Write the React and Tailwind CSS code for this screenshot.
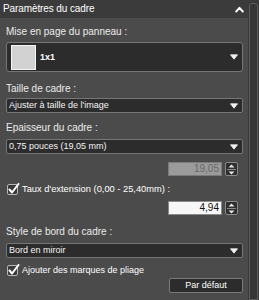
import React from "react";

const Arrow = () => (
  <svg width="8" height="6" viewBox="0 0 8 6" className="shrink-0">
    <path d="M0.5 0.8 L7.5 0.8 L4 5.2 Z" fill="#f2f2f2" stroke="#f2f2f2" strokeWidth="0.8" strokeLinejoin="round" />
  </svg>
);

const Dropdown = ({ children, className = "" }) => (
  <div className={"flex items-center justify-between bg-[#2c2c2c] border border-[#767676] rounded-[2px] pl-[2px] pr-[4px] h-[15px] " + className}>
    <span className="text-[9px] leading-[11px] text-[#f4f4f4] whitespace-nowrap">{children}</span>
    <Arrow />
  </div>
);

const Stepper = () => (
  <div className="w-[13px] h-[14px] bg-[#2e2e2e] border border-[#8a8a8a] rounded-[2px] flex flex-col items-center justify-center gap-[1px]">
    <svg width="7" height="4" viewBox="0 0 7 4"><path d="M0.5 3.6 L6.5 3.6 L3.5 0.4 Z" fill="#e8e8e8" /></svg>
    <div className="w-[9px] h-px bg-[#8a8a8a]" />
    <svg width="7" height="4" viewBox="0 0 7 4"><path d="M0.5 0.4 L6.5 0.4 L3.5 3.6 Z" fill="#e8e8e8" /></svg>
  </div>
);

const Check = () => (
  <svg width="14" height="12" viewBox="0 0 14 12" className="shrink-0">
    <rect x="0.5" y="1.5" width="10" height="10" rx="1.5" fill="#3a3a3a" stroke="#b8b8b8" />
    <path d="M2.5 6.5 L5 9.5 L11.5 1" fill="none" stroke="#ffffff" strokeWidth="2" strokeLinecap="round" strokeLinejoin="round" />
  </svg>
);

export default function App() {
  return (
    <div className="w-[259px] h-[300px] flex bg-[#4b4b4b] overflow-hidden font-['Liberation_Sans',Arial,sans-serif] text-[#ececec]">
      <div className="w-[248px] flex flex-col">
        <div className="h-[18px] bg-[#3b3b3b] flex items-center justify-between pl-[3px] pr-[4px]">
          <span className="text-[10px] leading-[12px] text-white font-['Liberation_Sans_Narrow','Liberation_Sans',sans-serif] tracking-[-0.1px]">Paramètres du cadre</span>
          <svg width="9" height="7" viewBox="0 0 9 7">
            <path d="M1.2 5.5 L4.5 1.8 L7.8 5.5" fill="none" stroke="#ffffff" strokeWidth="1.9" strokeLinecap="round" strokeLinejoin="round" />
          </svg>
        </div>
        <div className="flex flex-col pl-[6px] pr-[5px]">
          <div className="mt-[8px] text-[10px] leading-[12px]">Mise en page du panneau :</div>
          <div className="mt-[4px] h-[30px] flex items-center justify-between bg-[#2c2c2c] border border-[#767676] rounded-[3px] pl-[4px] pr-[4px]">
            <div className="flex items-center gap-[4px]">
              <div className="w-[25px] h-[25px] bg-[#d2d2d2] border border-[#f5f5f5]" />
              <span className="text-[9px] leading-[11px] font-bold text-white">1x1</span>
            </div>
            <Arrow />
          </div>
          <div className="mt-[11px] text-[10px] leading-[12px]">Taille de cadre :</div>
          <Dropdown className="mt-[3px]">Ajuster à taille de l'image</Dropdown>
          <div className="mt-[9px] text-[10px] leading-[12px]">Epaisseur du cadre :</div>
          <Dropdown className="mt-[5px]">0,75 pouces (19,05 mm)</Dropdown>
          <div className="mt-[8px] flex justify-end items-center gap-[3px] pr-[5px]">
            <div className="w-[54px] h-[14px] bg-[#9b9b9b] border border-[#7a7a7a] flex items-center justify-end pr-[2px] text-[10px] leading-[12px] text-[#686868]">19,05</div>
            <Stepper />
          </div>
          <div className="mt-[7px] h-[12px] flex items-center gap-[1px] ml-[1px]">
            <Check />
            <span className="text-[9.3px] leading-[12px] text-white whitespace-nowrap">Taux d'extension (0,00 - 25,40mm) :</span>
          </div>
          <div className="mt-[6px] flex justify-end items-center gap-[3px] pr-[5px]">
            <div className="w-[54px] h-[14px] bg-[#f7f7f7] border border-[#8a8a8a] flex items-center justify-end pr-[2px] text-[10px] leading-[12px] text-[#111]">4,94</div>
            <Stepper />
          </div>
          <div className="mt-[11px] text-[10px] leading-[12px]">Style de bord du cadre :</div>
          <Dropdown className="mt-[5px] h-[14px]">Bord en miroir</Dropdown>
          <div className="mt-[6px] h-[12px] flex items-center gap-[1px] ml-[1px]">
            <Check />
            <span className="text-[9px] leading-[12px] text-white whitespace-nowrap">Ajouter des marques de pliage</span>
          </div>
          <div className="mt-[2px] flex justify-end">
            <div className="w-[74px] h-[15px] bg-[#2c2c2c] border border-[#7a7a7a] rounded-[2px] flex items-center justify-center text-[9px] leading-[11px] text-white">Par défaut</div>
          </div>
        </div>
      </div>
      <div className="w-[11px] bg-[#3a3a3a] pt-[3px] pl-[1px] pr-[1px]">
        <div className="h-full border border-[#5c5c5c] rounded-t-[3px] bg-[#363636]" />
      </div>
    </div>
  );
}
